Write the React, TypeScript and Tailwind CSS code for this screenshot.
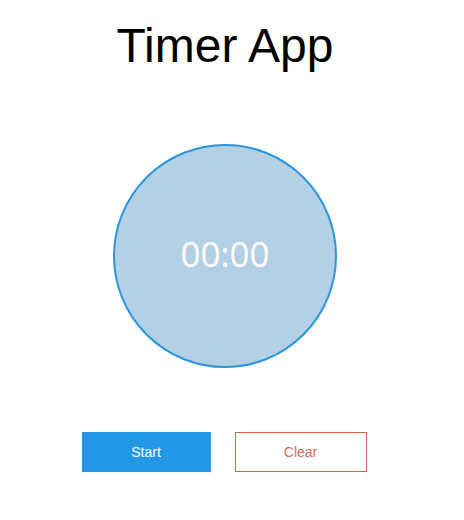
import React from "react";

export default function App() {
  return (
    <div className="w-[450px] flex flex-col items-center bg-white" style={{ fontFamily: '"Liberation Sans", Arial, sans-serif' }}>
      <h1 className="mt-[18px] text-[48px] leading-[55px] text-black font-normal">Timer App</h1>
      <div className="mt-[71px] w-[224px] h-[224px] rounded-full bg-[#b4d0e4] border-2 border-[#2b96dc] flex items-center justify-center pb-[5px]">
        <span className="text-white text-[35px] leading-none" style={{ fontFamily: '"Open Sans", "Noto Sans", sans-serif' }}>00:00</span>
      </div>
      <div className="mt-[64px] mr-[2px] flex gap-[24px]">
        <button className="w-[129px] h-[40px] bg-[#2298e6] text-white text-[14px]">Start</button>
        <button className="w-[132px] h-[40px] border border-[#d4604e] text-[#e0685a] text-[14px] bg-white">Clear</button>
      </div>
    </div>
  );
}
